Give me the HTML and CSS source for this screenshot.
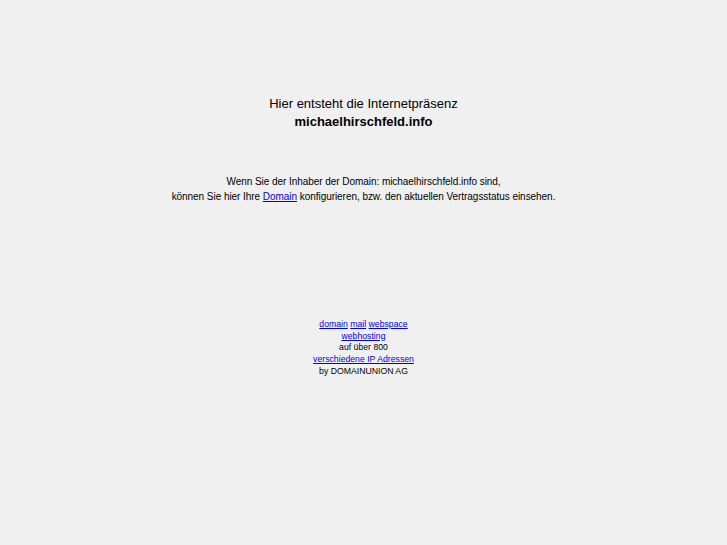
FILE: index.html
```html
<!DOCTYPE html>
<html lang="de">
<head>
<meta charset="utf-8">
<title>michaelhirschfeld.info</title>
<link rel="stylesheet" href="styles.css">
</head>
<body>
<div class="page">
  <div class="title">
    <div>Hier entsteht die Internetpräsenz</div>
    <div class="domain">michaelhirschfeld.info</div>
  </div>
  <div class="owner">
    <div>Wenn Sie der Inhaber der Domain: michaelhirschfeld.info sind,</div>
    <div>können Sie hier Ihre <a href="#">Domain</a> konfigurieren, bzw. den aktuellen Vertragsstatus einsehen.</div>
  </div>
  <div class="footer">
    <div><a href="#">domain</a> <a href="#">mail</a> <a href="#">webspace</a></div>
    <div><a href="#">webhosting</a></div>
    <div>auf über 800</div>
    <div><a href="#">verschiedene IP Adressen</a></div>
    <div>by DOMAINUNION AG</div>
  </div>
</div>
</body>
</html>
```
FILE: styles.css
```css
html, body {
  margin: 0;
  padding: 0;
  background: #f0f0f0;
  color: #000;
  font-family: "Liberation Sans", Arial, sans-serif;
}
.page {
  display: flex;
  flex-direction: column;
  align-items: center;
  text-align: center;
  padding-top: 95px;
}
a {
  color: #0000ee;
  text-decoration: underline;
}
.title {
  font-size: 13px;
  line-height: 18px;
}
.domain {
  font-weight: bold;
}
.owner {
  margin-top: 42.5px;
  font-size: 10px;
  line-height: 15px;
  letter-spacing: -0.05px;
}
.footer {
  margin-top: 115.5px;
  font-size: 8.7px;
  line-height: 11.7px;
}
```
